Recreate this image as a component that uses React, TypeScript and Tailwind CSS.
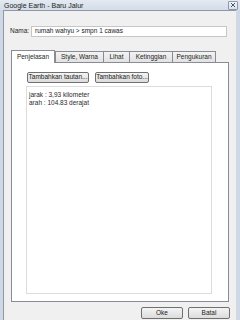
import React from "react";

const FONT = { fontFamily: '"Liberation Sans", Arial, sans-serif' };

const TABS = ["Penjelasan", "Style, Warna", "Lihat", "Ketinggian", "Pengukuran"];
const TAB_WIDTHS = ["w-[44px]", "w-[49px]", "w-[27px]", "w-[44px]", "w-[44px]"];

function WinButton({ label, className = "" }: { label: string; className?: string }) {
  return (
    <button
      type="button"
      className={`flex h-[11px] items-center justify-center rounded-[2px] border border-[#707070] bg-gradient-to-b from-[#f4f4f4] to-[#dcdcdc] text-[6.5px] leading-none text-[#1a1a1a] ${className}`}>
      {label}
    </button>
  );
}

export default function App() {
  return (
    <div
      style={FONT}
      className="flex h-[320px] w-[240px] flex-col overflow-hidden bg-[#cfd9e6] text-[6.5px] text-[#1e1e1e]">
      {/* title bar */}
      <div className="flex h-[10px] shrink-0 items-center justify-between bg-gradient-to-b from-[#e4eaf2] to-[#d3dce8] pl-[4px] pr-[2px]">
        <span className="text-[7px] leading-none text-[#222]">Google Earth - Baru Jalur</span>
        <div className="flex h-[9px] w-[10px] items-center justify-center rounded-[1px] border border-[#8d99aa] bg-gradient-to-b from-[#f2f5f9] to-[#d8e0ea]">
          <svg width="6" height="6" viewBox="0 0 6 6">
            <path d="M1 1 L5 5 M5 1 L1 5" stroke="#4a5566" strokeWidth="1" />
          </svg>
        </div>
      </div>

      <div className="flex min-h-0 flex-1 pl-[3px] pr-[4px]">
        <div className="flex min-w-0 flex-1 flex-col border-l border-t border-[#8e99a8] bg-[#f0f0f0]">
          {/* nama */}
          <div className="mt-[15px] flex h-[11px] items-center">
            <span className="ml-[6px] w-[21px] leading-none">Nama:</span>
            <div className="flex h-[11px] w-[196px] items-center border border-[#c6c6c6] bg-white pl-[3px] leading-none text-[#222]">
              rumah wahyu &gt; smpn 1 cawas
            </div>
          </div>

          {/* tabs */}
          <div className="ml-[7px] mt-[13px] flex items-end">
            {TABS.map((t, i) =>
              i === 0 ? (
                <div
                  key={t}
                  className={`relative z-10 -mb-px flex h-[13px] items-center justify-center border border-b-0 border-[#898c95] bg-white leading-none ${TAB_WIDTHS[i]}`}>
                  {t}
                </div>
              ) : (
                <div
                  key={t}
                  className={`-ml-px flex h-[11px] items-center justify-center border border-b-0 border-[#898c95] bg-gradient-to-b from-[#f3f3f3] to-[#e2e2e2] leading-none ${TAB_WIDTHS[i]} ${i === 1 ? "ml-0" : ""}`}>
                  {t}
                </div>
              )
            )}
          </div>

          {/* panel */}
          <div className="ml-[7px] flex h-[240px] w-[218px] flex-col border border-[#898c95] bg-white">
            <div className="ml-[15px] mt-[9px] flex gap-[6px]">
              <WinButton label="Tambahkan tautan..." className="w-[62px]" />
              <WinButton label="Tambahkan foto..." className="w-[54px]" />
            </div>
            <div className="ml-[14px] mt-[3px] h-[208px] w-[186px] border border-[#dcdcdc] bg-white px-[2px] pt-[4px] leading-[8px] text-[#2a2a2a]">
              <div>jarak : 3,93 kilometer</div>
              <div>arah : 104.83 derajat</div>
            </div>
          </div>

          {/* footer */}
          <div className="mt-auto mb-px ml-[137px] flex gap-[5px]">
            <WinButton label="Oke" className="h-[12px] w-[42px] border-[#3c7fb1]" />
            <WinButton label="Batal" className="h-[12px] w-[42px]" />
          </div>
        </div>
      </div>
    </div>
  );
}
